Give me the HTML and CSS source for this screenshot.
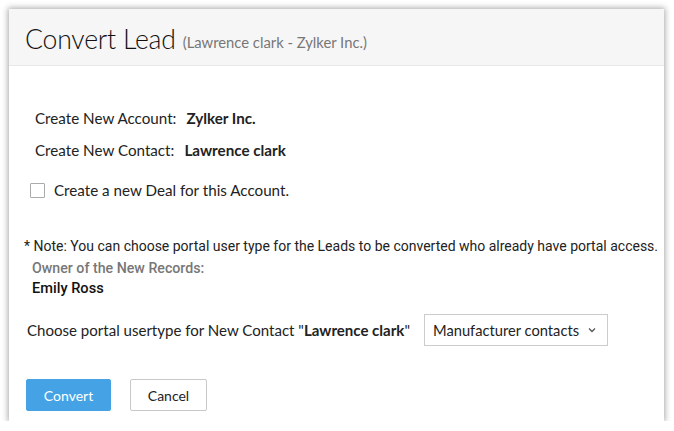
FILE: index.html
```html
<!DOCTYPE html>
<html>
<head>
<meta charset="utf-8">
<link rel="stylesheet" href="styles.css">
</head>
<body>
<div class="dialog">
  <div class="header">
    <span class="title">Convert Lead</span>
    <span class="subtitle">(Lawrence clark - Zylker Inc.)</span>
  </div>
  <div class="content">
    <div class="row row-account"><span>Create New Account:</span><b class="val">Zylker Inc.</b></div>
    <div class="row row-contact"><span>Create New Contact:</span><b class="val">Lawrence clark</b></div>
    <div class="row row-deal"><span class="checkbox"></span><span>Create a new Deal for this Account.</span></div>
    <div class="note">* Note: You can choose portal user type for the Leads to be converted who already have portal access.</div>
    <div class="owner-label">Owner of the New Records:</div>
    <div class="owner">Emily Ross</div>
    <div class="row row-portal">
      <span>Choose portal usertype for New Contact "<b>Lawrence clark</b>"</span>
      <div class="select">
        <span>Manufacturer contacts</span>
        <svg class="chev" width="8" height="6" viewBox="0 0 8 6"><path d="M1 1.5 L4 4.5 L7 1.5" fill="none" stroke="#555" stroke-width="1.3"/></svg>
      </div>
    </div>
    <div class="buttons">
      <button class="btn btn-primary">Convert</button>
      <button class="btn btn-default">Cancel</button>
    </div>
  </div>
</div>
</body>
</html>
```
FILE: styles.css
```css
html, body {
  margin: 0;
  padding: 0;
  background: #fff;
}
body {
  font-family: Lato, "Open Sans", sans-serif;
  color: #222;
  font-size: 15.2px;
}
.dialog {
  margin: 9px 0 0 9px;
  width: 655px;
  height: 412px;
  background: #fff;
  box-shadow: 0 0 6px 1px rgba(0,0,0,0.35);
}
.header {
  height: 57px;
  background: #f6f6f6;
  border-bottom: 1px solid #e8e8e8;
  box-sizing: border-box;
  padding-left: 16px;
  display: flex;
  align-items: center;
  padding-top: 4px;
}
.title {
  font-size: 26.6px;
  font-weight: 300;
  color: #111;
  letter-spacing: -0.2px;
}
.subtitle {
  font-size: 14.8px;
  color: #777;
  margin-left: 7px;
  margin-top: 6px;
  font-weight: 400;
}
.content {
  display: flex;
  flex-direction: column;
}
.row {
  display: flex;
  align-items: center;
  height: 20px;
}
.row b, .val {
  font-weight: 700;
}
.val {
  margin-left: 10px;
}
.row-account {
  margin-top: 42px;
  padding-left: 26px;
}
.row-contact {
  margin-top: 12px;
  padding-left: 26px;
}
.row-deal {
  margin-top: 20px;
  padding-left: 21px;
}
.checkbox {
  width: 13px;
  height: 13px;
  border: 1px solid #aaa;
  border-radius: 1px;
  margin-right: 9px;
  display: inline-block;
}
.note {
  margin-top: 36px;
  padding-left: 15px;
  font-family: Roboto, sans-serif;
  font-size: 14px;
  line-height: 20px;
  color: #222;
  white-space: nowrap;
}
.owner-label {
  padding-left: 23px;
  font-family: Roboto, sans-serif;
  font-size: 14.2px;
  line-height: 20px;
  color: #777;
  font-weight: 500;
  margin-top: 2px;
}
.owner {
  padding-left: 23px;
  font-family: Roboto, sans-serif;
  font-size: 14.6px;
  line-height: 20px;
  color: #111;
  font-weight: 500;
}
.row-portal {
  margin-top: 16px;
  height: 32px;
  padding-left: 18px;
  font-size: 15.05px;
}
.select {
  margin-left: 14px;
  width: 184px;
  height: 32px;
  box-sizing: border-box;
  border: 1px solid #ccc;
  display: flex;
  align-items: center;
  justify-content: space-between;
  padding: 0 11px 0 8px;
  font-size: 14.7px;
  color: #222;
}
.chev {
  display: block;
}
.buttons {
  margin-top: 33px;
  padding-left: 17px;
  display: flex;
  gap: 19px;
}
.btn {
  height: 32px;
  font-family: Lato, sans-serif;
  font-size: 14px;
  border-radius: 2px;
  padding: 0;
}
.btn-primary {
  width: 85px;
  background: #45a3e5;
  border: 1px solid #45a3e5;
  color: #fff;
}
.btn-default {
  width: 77px;
  background: #fff;
  border: 1px solid #c8c8c8;
  color: #222;
}
```
